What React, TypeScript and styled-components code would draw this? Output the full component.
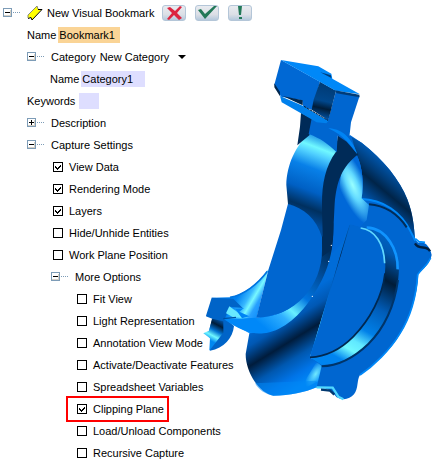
import React, { useId, useState } from "react";
import styled, { createGlobalStyle } from "styled-components";

const GlobalStyle = createGlobalStyle`
  *, *::before, *::after { box-sizing: border-box; }
  body {
    margin: 0;
    background: #fff;
    color: #000;
    font: 11px/22px "Liberation Sans", Arial, sans-serif;
  }
`;

const Page = styled.main`
  display: flex;
  align-items: flex-start;
`;

const Tree = styled.section`
  flex: 0 0 200px;
  min-width: 0;
  position: relative;
  z-index: 1;
  padding-top: 2px;
  white-space: nowrap;
`;

const Branch = styled.div<{ $indent: number }>`
  padding-left: ${(p) => p.$indent}px;
`;

const Row = styled.div<{ $gap?: number }>`
  display: flex;
  align-items: center;
  width: max-content;
  height: 22px;
  gap: ${(p) => p.$gap ?? 0}px;
`;

const Toggle = styled.button`
  display: flex;
  width: 24px;
  height: 22px;
  padding: 0;
  align-items: center;
  border: 0;
  background: none;
`;

const Title = styled.span`
  padding-left: 4px;
`;

const Actions = styled.div`
  display: flex;
  gap: 9px;
  padding-left: 8px;
`;

const ActionButton = styled.button`
  display: grid;
  place-items: center;
  width: 24px;
  height: 16px;
  padding: 0;
  border: 1px solid #b4c6d8;
  border-radius: 3px;
  background: linear-gradient(#e8ebf0, #dcdfe6 60%, #b4c8dc);
`;

const Field = styled.input<{ $width: number; $tone: string }>`
  width: ${(p) => p.$width}px;
  height: 16px;
  padding: 0 1px;
  border: 0;
  border-radius: 0;
  background: ${(p) => p.$tone};
  color: inherit;
  font: inherit;
  line-height: 16px;
`;

const Picker = styled.div`
  display: grid;
  align-items: center;
`;

const Select = styled.select`
  grid-area: 1 / 1;
  width: 86px;
  height: 20px;
  padding: 0;
  border: 0;
  appearance: none;
  background: none;
  color: inherit;
  font: inherit;
  line-height: 20px;
`;

const Caret = styled.svg`
  grid-area: 1 / 1;
  justify-self: end;
  pointer-events: none;
`;

const Option = styled.label<{ $marked: boolean }>`
  display: flex;
  align-items: center;
  gap: 6px;
  width: max-content;
  height: 22px;
  padding: 0 3px 0 9px;
  outline: ${(p) => (p.$marked ? "2px solid #f00" : "none")};
`;

const Tick = styled.span`
  display: grid;
  width: 10px;
  height: 10px;

  input {
    grid-area: 1 / 1;
    width: 10px;
    height: 10px;
    margin: 0;
    appearance: none;
    border: 1px solid #000;
    background: #fff;
  }

  svg {
    grid-area: 1 / 1;
    z-index: 1;
    pointer-events: none;
    visibility: hidden;
  }

  input:checked + svg { visibility: visible; }
`;

const Drawing = styled.svg`
  flex: none;
  margin-top: 50px;
`;

function Expander({ label, closed }: { label: string; closed?: boolean }) {
  return (
    <Toggle type="button" aria-label={label} aria-expanded={!closed}>
      <svg width="18" height="10" viewBox="0 0 18 10" shapeRendering="crispEdges">
        <rect x="0" y="0" width="9" height="9" fill="#7d9cb7" />
        <rect x="1" y="1" width="7" height="7" fill="#fff" />
        <path d="M2 7h6v1H1V7zM7 2h1v6H7z" fill="#d5cfc4" />
        <path d="M2 4h5v1H2z" fill="#000" />
        {closed && <path d="M4 2h1v5H4z" fill="#000" />}
        <path d="M10 4h1v1h-1zM12 4h1v1h-1zM14 4h1v1h-1zM16 4h1v1h-1z" fill="#7d9cb7" />
      </svg>
    </Toggle>
  );
}

function CheckOption({ label, on, marked }: { label: string; on?: boolean; marked?: boolean }) {
  const [checked, setChecked] = useState(Boolean(on));
  return (
    <Option $marked={Boolean(marked)}>
      <Tick>
        <input type="checkbox" checked={checked} onChange={(e) => setChecked(e.target.checked)} />
        <svg width="10" height="10" viewBox="0 0 10 10" shapeRendering="crispEdges">
          <path d="M2 4h1v1h1v1h1V5h1V4h1V3h1v2H7v1H6v1H5v1H4V7H3V6H2z" />
        </svg>
      </Tick>
      {label}
    </Option>
  );
}

function BookmarkIcon() {
  return (
    <svg width="16" height="17" viewBox="0 0 16 17">
      <path d="M1 10 10 1 11 4 15 4 5 15 4 12.500 1 13z" fill="#ff0" />
      <path d="M1 13V10L10 1l1 3" fill="none" stroke="#8a8a78" />
      <path d="M11 4.500h4L5 15 4 12.500 1 13.500" fill="none" stroke="#000" />
    </svg>
  );
}

function Housing() {
  return (
    <Drawing width="235" height="360" viewBox="0 0 705 1080" role="img" aria-label="Clipped housing part">
      <defs>
        <linearGradient id="drum" gradientUnits="userSpaceOnUse" x1="370" y1="255" x2="277" y2="500">
          <stop offset="0" stopColor="#0878e0" />
          <stop offset=".16" stopColor="#70f8ff" />
          <stop offset=".24" stopColor="#50d0ff" />
          <stop offset=".4" stopColor="#0880e8" />
          <stop offset=".65" stopColor="#0060c4" />
          <stop offset=".84" stopColor="#00305f" />
          <stop offset="1" stopColor="#004a98" />
        </linearGradient>
        <linearGradient id="shell" gradientUnits="userSpaceOnUse" x1="600" y1="350" x2="500" y2="470">
          <stop offset="0" stopColor="#0064c8" />
          <stop offset=".36" stopColor="#003c78" />
          <stop offset=".55" stopColor="#002448" />
          <stop offset="1" stopColor="#0062c8" />
        </linearGradient>
        <linearGradient id="barrel" gradientUnits="userSpaceOnUse" x1="300" y1="740" x2="420" y2="935">
          <stop offset="0" stopColor="#006cd8" />
          <stop offset=".2" stopColor="#0058b4" />
          <stop offset=".43" stopColor="#001c3c" />
          <stop offset=".65" stopColor="#0058b0" />
          <stop offset=".85" stopColor="#0074e8" />
          <stop offset="1" stopColor="#0088f8" />
        </linearGradient>
        <linearGradient id="ring" gradientUnits="userSpaceOnUse" x1="390" y1="600" x2="190" y2="830">
          <stop offset="0" stopColor="#002c58" />
          <stop offset=".28" stopColor="#0050a0" />
          <stop offset=".52" stopColor="#0074e0" />
          <stop offset=".7" stopColor="#68f0ff" />
          <stop offset=".8" stopColor="#30b0ff" />
          <stop offset="1" stopColor="#0088f8" />
        </linearGradient>
        <linearGradient id="arm" gradientUnits="userSpaceOnUse" x1="130" y1="710" x2="215" y2="760">
          <stop offset="0" stopColor="#0080f0" />
          <stop offset=".3" stopColor="#38b8ff" />
          <stop offset=".45" stopColor="#78f8ff" />
          <stop offset=".62" stopColor="#28a0ff" />
          <stop offset="1" stopColor="#0084f8" />
        </linearGradient>
        <linearGradient id="groove" gradientUnits="userSpaceOnUse" x1="585" y1="560" x2="375" y2="930">
          <stop offset="0" stopColor="#0064c8" />
          <stop offset=".12" stopColor="#0058b0" />
          <stop offset=".3" stopColor="#001c38" />
          <stop offset=".5" stopColor="#005cb8" />
          <stop offset=".68" stopColor="#0080e8" />
          <stop offset=".78" stopColor="#60e8ff" />
          <stop offset=".85" stopColor="#70f8ff" />
          <stop offset=".94" stopColor="#0084f0" />
        </linearGradient>
        <linearGradient id="slot" gradientUnits="userSpaceOnUse" x1="380" y1="110" x2="358" y2="205">
          <stop offset="0" stopColor="#003c78" />
          <stop offset=".45" stopColor="#00478c" />
          <stop offset=".68" stopColor="#001c38" />
          <stop offset="1" stopColor="#0058b0" />
        </linearGradient>
        <linearGradient id="hook" gradientUnits="userSpaceOnUse" x1="62" y1="805" x2="28" y2="870">
          <stop offset="0" stopColor="#0060c0" />
          <stop offset=".3" stopColor="#001c38" />
          <stop offset=".55" stopColor="#0070d0" />
          <stop offset=".78" stopColor="#70f8ff" />
          <stop offset="1" stopColor="#0088f0" />
        </linearGradient>
        <radialGradient id="shine" gradientUnits="userSpaceOnUse" cx="0" cy="0" r="1" gradientTransform="translate(458 405) rotate(66) scale(130 40)">
          <stop offset="0" stopColor="#98ffff" />
          <stop offset=".4" stopColor="#60d8ff" />
          <stop offset="1" stopColor="#0068d8" />
        </radialGradient>
        <radialGradient id="glint" gradientUnits="userSpaceOnUse" cx="0" cy="0" r="1" gradientTransform="translate(347 972) rotate(-58) scale(48 22)">
          <stop offset="0" stopColor="#70e8ff" />
          <stop offset="1" stopColor="#70e8ff" stopOpacity="0" />
        </radialGradient>
      </defs>

      {/* flange and lugs */}
      <path fill="#0066d0" d="M400 300 450 255 485 278C550 328 600 390 622 448 640 495 642 530 645 568L655 578C675 572 690 590 695 615 690 640 672 655 655 672 652 740 630 800 602 850 570 905 520 948 480 975 470 990 476 1015 462 1033 450 1047 430 1053 410 1042 395 1020 380 1012 350 1014L330 900Z" />
      <path fill="url(#shell)" d="M455 262 485 278C550 328 600 390 622 448 640 495 642 530 645 568L628 540C590 475 545 450 485 445 492 400 487 350 470 315Z" />
      <path fill="none" stroke="#0088f8" strokeWidth="6" d="M482 447C550 448 605 487 632 545L646 572" />
      <path fill="none" stroke="#002c58" strokeWidth="6" d="M507 463C560 467 596 496 620 532" />
      <path fill="none" stroke="#002040" strokeWidth="7" d="M645 580C658 603 680 582 690 604" />
      <path fill="none" stroke="#0090ff" strokeWidth="5" d="M646 566 657 575 675 577" />
      <path fill="none" stroke="#0088f8" strokeWidth="5" d="M692 624C680 650 664 656 653 674 648 750 630 803 600 850 570 900 520 948 480 975" />

      {/* lower barrel */}
      <path fill="url(#barrel)" d="M402 500 470 500 450 525 330 922 365 948 350 1012C315 1027 270 1037 220 1037 180 1030 137 970 137 912L148 850 300 740 380 650Z" />
      <path fill="url(#glint)" d="M310 1000 350 935 365 948 354 994 320 1012Z" />
      <path fill="#0086f4" d="M165 1000 350 992 350 1012C315 1027 270 1037 220 1037 195 1033 177 1020 165 1000Z" opacity=".55" />
      <path fill="none" stroke="#50d8ff" strokeWidth="7" d="M350 1012 398 1013 415 1040 430 1048" />
      <path fill="none" stroke="#003870" strokeWidth="7" d="M363 1019 390 1022 403 1034" />

      {/* recessed plate with its groove */}
      <path fill="url(#groove)" d="M448 524 480 530 530 535C565 552 600 600 597 655 595 740 560 828 505 880 460 925 415 944 365 945L330 922Z" />
      <path fill="none" stroke="#1094ff" strokeWidth="8" d="M500 533C560 535 595 600 593 658" />
      <path fill="none" stroke="#003468" strokeWidth="6" d="M594 690C583 770 552 835 505 882 458 927 415 948 365 949" />
      <path fill="#0066d0" d="M450 525C520 522 554 580 556 650 554 735 510 808 460 860 420 900 380 920 330 922Z" />
      <path fill="none" stroke="#60d8ff" strokeWidth="5" d="M482 534C525 540 552 580 554 640" />
      <path fill="none" stroke="#002850" strokeWidth="5" d="M555 670C547 740 510 808 460 860 420 900 380 920 330 922" />

      {/* bright saddle beside the cut */}
      <path fill="#0068d8" d="M470 315C487 350 492 400 485 445L507 465 500 510 480 530 450 522 425 580 396 610 395 500 420 370Z" />
      <path fill="url(#shine)" d="M470 315C487 350 492 400 485 445L507 465 500 510 480 530 450 522 415 440 425 355Z" />

      {/* left arm */}
      <path fill="url(#arm)" d="M205 658C175 700 130 735 90 742L35 743 72 808 148 850 210 845 240 790 170 803Z" />
      <path fill="none" stroke="#0074e0" strokeWidth="5" d="M202 664C175 701 132 735 90 742" />
      <path fill="#0064c8" d="M35 743 100 746 128 774 90 770 75 805 102 828C98 865 72 895 30 902L30 866 18 797Z" />
      <path fill="#fff" d="M17 799 37 806 27 842 10 850Z" />
      <path fill="url(#hook)" d="M36 806 70 814 70 848 53 870 28 902 30 865 10 850 27 842Z" />
      <path fill="#68e8ff" d="M88 769 131 800 102 803 78 790Z" />
      <path fill="#0084f4" d="M106 777 132 774 118 785 148 799 126 805Z" />
      <path fill="none" stroke="#0050a0" strokeWidth="4" d="M70 806 108 802" />

      {/* bore ring and section face */}
      <path fill="url(#ring)" d="M340 505 400 520C403 610 380 675 337 740 290 810 240 844 190 850 157 854 118 840 72 808L170 803C320 800 380 660 340 505Z" />
      <path fill="#0066d0" d="M264 461 243 540 205 660 169 803C285 802 367 706 366 600L366 480Z" />
      <path fill="url(#drum)" d="M328 250C288 285 260 345 259 405L264 462C310 473 350 506 366 562L400 500 412 303C385 278 360 260 328 250Z" />
      <path fill="#002b58" d="M413 256 440 267 475 313C425 350 410 395 404 460L399 560 394 600 366 620C371 570 366 515 366 460 366 402 376 348 408 305Z" />
      <circle cx="394" cy="586" r="2" fill="#fff" />
      <circle cx="386" cy="634" r="2" fill="#fff" />
      <circle cx="337" cy="739" r="2" fill="#fff" />

      {/* neck and head */}
      <path fill="#002b58" d="M303 188 340 208 328 256 292 286 300 230Z" />
      <path fill="#0066d0" d="M336 200 385 208 408 122 478 140 453 217 448 262 472 312 440 275 413 257 410 307C385 282 360 264 326 252Z" />
      <path fill="#0084f4" d="M385 235C420 235 455 260 472 313 450 285 435 258 385 235Z" />
      <path fill="#0068d4" d="M243 30 223 104 243 140 306 151 310 170 337 180 360 95Z" />
      <path fill="#002850" d="M223 100 240 126 240 139 223 112ZM248 138 308 151 308 166Z" />
      <path fill="#0080ec" d="M240 138 310 168 385 213 379 220 350 217 303 190 245 157Z" />
      <path fill="url(#slot)" d="M360 95 408 122 385 211 335 179 341 149Z" />
      <path fill="#0088f8" d="M243 30 355 49 394 71 397 86 480 133 407 122Z" />
      <path fill="#003c78" d="M361 67 393 76 394 84ZM405 121 478 134 479 142 410 130Z" />
      <path fill="none" stroke="#002040" strokeWidth="3" strokeDasharray="8 2" d="M312 169 384 211" />
    </Drawing>
  );
}

export default function App() {
  const id = useId();
  return (
    <>
      <GlobalStyle />
      <Page>
        <Tree aria-label="Bookmark definition">
          <Branch $indent={3}>
            <Row>
              <Expander label="New Visual Bookmark" />
              <BookmarkIcon />
              <Title>New Visual Bookmark</Title>
              <Actions>
                <ActionButton type="button" aria-label="Cancel">
                  <svg width="16" height="14" viewBox="0 0 16 14">
                    <path d="m1 2 3-1 5 4 5-5 2 1-5 6 5 5-3 2-5-5-5 5-2-1 5-6z" fill="#dc2440" />
                  </svg>
                </ActionButton>
                <ActionButton type="button" aria-label="Accept">
                  <svg width="20" height="14" viewBox="0 0 20 14">
                    <path d="m1 4 3-1 4 5 9-8 3 0L8 13z" fill="#227858" />
                  </svg>
                </ActionButton>
                <ActionButton type="button" aria-label="Apply">
                  <svg width="8" height="14" viewBox="0 0 8 14">
                    <path d="M2 0h4L5 9H3zM3 11h3v2H3z" fill="#227858" />
                  </svg>
                </ActionButton>
              </Actions>
            </Row>
          </Branch>
          <Branch $indent={27}>
            <Row $gap={2}>
              <label htmlFor={id + "bookmark"}>Name</label>
              <Field id={id + "bookmark"} $width={62} $tone="#fad496" defaultValue="Bookmark1" />
            </Row>
            <Row>
              <Expander label="Category" />
              <Row $gap={4}>
                <label htmlFor={id + "category"}>Category</label>
                <Picker>
                  <Select id={id + "category"}>
                    <option>New Category</option>
                  </Select>
                  <Caret width="8" height="4" viewBox="0 0 8 4">
                    <path d="M0 0h8L4 4z" />
                  </Caret>
                </Picker>
              </Row>
            </Row>
            <Branch $indent={23}>
              <Row $gap={2}>
                <label htmlFor={id + "name"}>Name</label>
                <Field id={id + "name"} $width={64} $tone="#dedeff" defaultValue="Category1" />
              </Row>
            </Branch>
            <Row $gap={4}>
              <label htmlFor={id + "keywords"}>Keywords</label>
              <Field id={id + "keywords"} $width={20} $tone="#dedeff" />
            </Row>
            <Row>
              <Expander label="Description" closed />
              Description
            </Row>
            <Row>
              <Expander label="Capture Settings" />
              Capture Settings
            </Row>
            <Branch $indent={17}>
              <CheckOption label="View Data" on />
              <CheckOption label="Rendering Mode" on />
              <CheckOption label="Layers" on />
              <CheckOption label="Hide/Unhide Entities" />
              <CheckOption label="Work Plane Position" />
            </Branch>
            <Branch $indent={24}>
              <Row>
                <Expander label="More Options" />
                More Options
              </Row>
              <Branch $indent={17}>
                <CheckOption label="Fit View" />
                <CheckOption label="Light Representation" />
                <CheckOption label="Annotation View Mode" />
                <CheckOption label="Activate/Deactivate Features" />
                <CheckOption label="Spreadsheet Variables" />
                <CheckOption label="Clipping Plane" on marked />
                <CheckOption label="Load/Unload Components" />
                <CheckOption label="Recursive Capture" />
              </Branch>
            </Branch>
          </Branch>
        </Tree>
        <Housing />
      </Page>
    </>
  );
}
